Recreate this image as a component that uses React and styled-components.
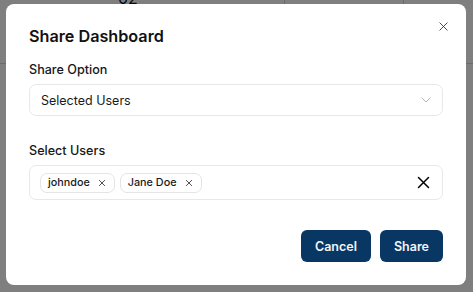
import React, { useState } from "react";
import styled, { createGlobalStyle } from "styled-components";

const GlobalStyle = createGlobalStyle`
  html, body {
    margin: 0;
    padding: 0;
    width: 473px;
    height: 292px;
    overflow: hidden;
    background: #ffffff;
    font-family: Inter, "Liberation Sans", sans-serif;
  }
`;

const Page = styled.div`
  position: relative;
  width: 473px;
  height: 292px;
  overflow: hidden;
`;

// faint table that sits behind the overlay
const Backdrop = styled.div`
  display: grid;
  grid-template-columns: 285px 73px 1fr;
  grid-template-rows: 64px 1fr;
  height: 100%;
`;

const Cell = styled.div`
  border-right: ${(p) => (p.$last ? "none" : "1px solid #d6d6d6")};
  border-bottom: ${(p) => (p.$head ? "1px solid #d6d6d6" : "none")};
  font-size: 16px;
  color: #111;
  padding-left: 118px;
  line-height: 1;
  margin-top: -10px;
`;

const Overlay = styled.div`
  position: absolute;
  inset: 0;
  background: rgba(0, 0, 0, 0.5);
`;

const Dialog = styled.div`
  position: absolute;
  left: 6px;
  top: 4px;
  width: 460px;
  height: 281px;
  box-sizing: border-box;
  background: #fff;
  border-radius: 8px;
  padding: 20px 23px 23px;
  display: flex;
  flex-direction: column;
`;

const CloseButton = styled.button`
  position: absolute;
  top: 16px;
  right: 17px;
  width: 12px;
  height: 12px;
  padding: 0;
  border: none;
  background: none;
  color: #333;
  display: flex;
  align-items: center;
  justify-content: center;
`;

const Title = styled.h2`
  margin: 0;
  font-size: 16.2px;
  line-height: 24px;
  font-weight: 600;
  color: #111;
`;

const Label = styled.label`
  display: block;
  margin-top: ${(p) => p.$top}px;
  font-size: 12.6px;
  line-height: 20px;
  font-weight: 500;
  color: #171717;
`;

const Field = styled.div`
  margin-top: 4px;
  height: ${(p) => p.$h}px;
  box-sizing: border-box;
  border: 1px solid #e8e8e8;
  border-radius: 7px;
  display: flex;
  align-items: center;
  padding: 0 11px 0 ${(p) => p.$pl}px;
  gap: 5px;
`;

const Value = styled.span`
  flex: 1;
  font-size: 12.5px;
  color: #1a1a1a;
`;

const Chip = styled.span`
  display: inline-flex;
  align-items: center;
  gap: 8px;
  height: 20px;
  box-sizing: border-box;
  padding: 0 8px 0 7px;
  border: 1px solid #e4e4e4;
  border-radius: 7px;
  font-size: 10.8px;
  font-weight: 500;
  color: #1a1a1a;
`;

const Spacer = styled.span`
  flex: 1;
`;

const Footer = styled.div`
  margin-top: auto;
  display: flex;
  justify-content: flex-end;
  gap: 9px;
`;

const Button = styled.button`
  height: 32px;
  padding: 0 14px;
  border: none;
  border-radius: 6px;
  background: #083763;
  color: #f2f4f7;
  font-family: Inter, "Liberation Sans", sans-serif;
  font-size: 12.5px;
  font-weight: 600;
`;

const XIcon = ({ size, stroke = 1.5, color = "currentColor" }) => (
  <svg width={size} height={size} viewBox="0 0 24 24" fill="none" stroke={color} strokeWidth={stroke} strokeLinecap="round">
    <path d="M4 4L20 20M20 4L4 20" />
  </svg>
);

const Chevron = () => (
  <svg width="10" height="6" viewBox="0 0 10 6" fill="none" stroke="#b5b5b5" strokeWidth="1" strokeLinecap="round" strokeLinejoin="round">
    <path d="M1 1L5 5L9 1" />
  </svg>
);

function App() {
  const [users] = useState(["johndoe", "Jane Doe"]);

  return (
    <Page>
      <GlobalStyle />
      <Backdrop>
        <Cell $head>02</Cell>
        <Cell $head />
        <Cell $head $last />
      </Backdrop>
      <Overlay />
      <Dialog>
        <CloseButton>
          <XIcon size={11} stroke={2} color="#3a3a3a" />
        </CloseButton>
        <Title>Share Dashboard</Title>
        <Label $top={12}>Share Option</Label>
        <Field $h={32} $pl={11}>
          <Value>Selected Users</Value>
          <Chevron />
        </Field>
        <Label $top={25}>Select Users</Label>
        <Field $h={35} $pl={10}>
          {users.map((u) => (
            <Chip key={u}>
              {u}
              <XIcon size={8} stroke={2.6} color="#333" />
            </Chip>
          ))}
          <Spacer />
          <XIcon size={15} stroke={2.4} color="#000" />
        </Field>
        <Footer>
          <Button>Cancel</Button>
          <Button>Share</Button>
        </Footer>
      </Dialog>
    </Page>
  );
}

export default App;
